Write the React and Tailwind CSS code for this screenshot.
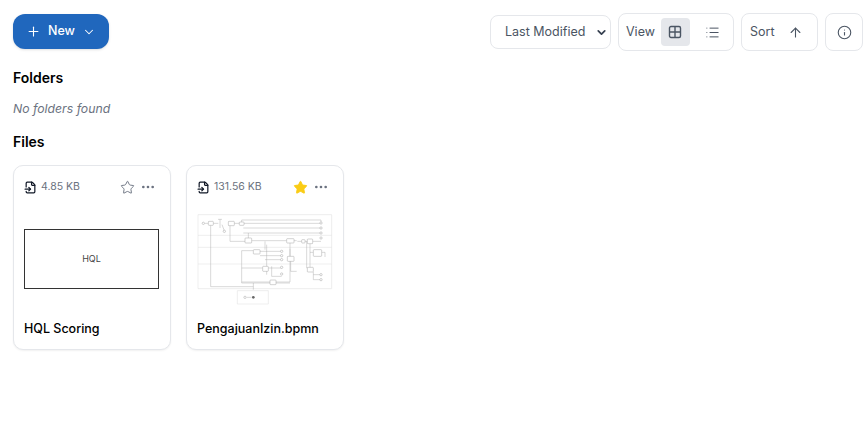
import React from "react";
import { Plus, ChevronDown, ArrowUp, Info, Star, Ellipsis, List, FileInput } from "lucide-react";

const Lines = [
  "M44 46H55","M70 46H85","M62 52V236H190","M90 34V60M84 34H96","M96 50L103 68",
  "M133 46H148","M162 46H393","M155 36H393V45","M155 36V42","M160 60H393","M160 75H393","M120 52V100H165","M175 75V90",
  "M185 98H290","M155 128H190","M210 130H275","M210 143H275","M225 155H275","M225 100V125","M230 110V200",
  "M155 128V225H300","M155 180H218","M235 180H275","M245 175V205H275","M155 222H240","M258 222H300","M300 122V222",
  "M300 105V145","M302 160V190H320","M312 98H320","M322 100H335","M345 100H352","M368 100H393","M360 107V178","M350 100V180H352",
  "M370 200H393","M370 215H393","M370 192V215","M395 133H405V147","M360 133H370","M190 225V245","M170 268H185",
];
const Tasks = [
  [55,40,15,12],[115,40,18,13],[148,42,14,10],[165,90,20,15],[190,125,20,13],[218,175,17,15],[240,216,18,14],
  [290,92,22,13],[292,145,20,15],[335,95,10,10],[352,93,16,14],[352,178,18,14],[370,125,25,20],
];
const Dots = [[40,46],[103,70],[393,45],[393,60],[393,75],[393,90],[275,130],[275,143],[275,155],[275,178],[275,198],[393,200],[393,215],[165,268]];

function Diagram() {
  return (
    <svg viewBox="0 0 450 300" className="w-[150px] h-[100px] shrink-0 -ml-[7px] blur-[0.3px]" fill="none">
      <path d="M24 20H425V242H24Z M24 82H425 M24 118H425 M24 168H425 M142 248H235V288H142Z" stroke="#dcdcdc" strokeWidth="1.5" />
      {Lines.map((d, i) => <path key={i} d={d} stroke="#a3a3a3" strokeWidth="1.3" />)}
      {Tasks.map(([x, y, w, h], i) => <rect key={i} x={x} y={y} width={w} height={h} rx="2" fill="#fff" stroke="#969696" strokeWidth="1.3" />)}
      {Dots.map(([x, y], i) => <circle key={i} cx={x} cy={y} r="3.5" fill="#fff" stroke="#969696" strokeWidth="1.3" />)}
      <circle cx="190" cy="268" r="4" fill="#666" />
    </svg>
  );
}

function Card({ size, starred, name, children }) {
  return (
    <div className="w-[158px] h-[185px] rounded-[10px] border border-[#e5e7eb] bg-white shadow-[0_1px_2px_rgba(0,0,0,0.06)] flex flex-col px-[10px]">
      <div className="h-[42px] flex items-center shrink-0">
        <FileInput size={13} strokeWidth={2.25} className="text-[#111827] mr-[4px]" />
        <span className="text-[10.5px] text-[#6b7280]">{size}</span>
        <Star
          size={15}
          strokeWidth={1.5}
          className={"ml-auto " + (starred ? "text-[#facc15] fill-[#facc15]" : "text-[#6b7280]")}
        />
        <Ellipsis size={16} strokeWidth={2} className="text-[#6b7280] ml-[5px] mr-[4px]" />
      </div>
      <div className="h-[100px] shrink-0 flex items-start justify-start">{children}</div>
      <div className="flex-1 flex items-center text-[12.5px] font-medium text-black pt-[1px]">{name}</div>
    </div>
  );
}

export default function App() {
  return (
    <div className="w-[866px] h-[442px] bg-white pl-[13px] pr-[3px] pt-[13px] font-['Inter','Liberation_Sans',sans-serif] overflow-hidden">
      <div className="flex items-center justify-between h-[38px]">
        <button className="w-[96px] h-[35px] -mt-[1px] rounded-[12px] bg-[#2067bd] text-white flex items-center justify-center text-[12.5px] font-medium shadow-sm">
          <Plus size={15} strokeWidth={1.75} className="mr-[7px]" />
          New
          <ChevronDown size={14} strokeWidth={1.75} className="ml-[7px]" />
        </button>
        <div className="flex items-center gap-[7px] text-[12.5px] text-[#4b5563]">
          <div className="w-[121px] h-[34px] rounded-[8px] border border-[#e5e7eb] flex items-center pl-[14px] pr-[2px] justify-between">
            <span>Last Modified</span>
            <ChevronDown size={13} strokeWidth={3.25} className="text-[#374151]" />
          </div>
          <div className="w-[116px] h-[38px] rounded-[8px] border border-[#e5e7eb] flex items-center pl-[7px]">
            <span>View</span>
            <div className="ml-[6px] w-[29px] h-[28px] rounded-[4px] bg-[#e5e7eb] flex items-center justify-center">
              <svg width="14" height="14" viewBox="0 0 14 14" fill="none" stroke="#4b5563" strokeWidth="1.4">
                <rect x="1.5" y="1.5" width="11" height="11" rx="1.5" />
                <path d="M7 1.5V12.5M1.5 7H12.5" />
              </svg>
            </div>
            <List size={15} strokeWidth={1.6} className="ml-[15px] text-[#4b5563]" />
          </div>
          <div className="w-[77px] h-[38px] rounded-[8px] border border-[#e5e7eb] flex items-center pl-[8px]">
            <span>Sort</span>
            <ArrowUp size={15} strokeWidth={1.75} className="ml-[13px] text-[#4b5563]" />
          </div>
          <div className="w-[38px] h-[38px] rounded-[8px] border border-[#e5e7eb] flex items-center justify-center">
            <Info size={15} strokeWidth={1.75} className="text-[#4b5563]" />
          </div>
        </div>
      </div>

      <h2 className="mt-[17px] text-[14px] leading-[20px] font-semibold text-black">Folders</h2>
      <p className="mt-[11px] text-[12.25px] leading-[20px] italic text-[#6b7280]">No folders found</p>
      <h2 className="mt-[13px] text-[14px] leading-[20px] font-semibold text-black">Files</h2>

      <div className="mt-[13px] flex gap-[15px]">
        <Card size="4.85 KB" name="HQL Scoring">
          <div className="mt-[21px] w-[135px] h-[60px] border border-[#333] flex items-center justify-center text-[9px] text-[#444]">
            HQL
          </div>
        </Card>
        <Card size="131.56 KB" starred name="PengajuanIzin.bpmn">
          <Diagram />
        </Card>
      </div>
    </div>
  );
}
